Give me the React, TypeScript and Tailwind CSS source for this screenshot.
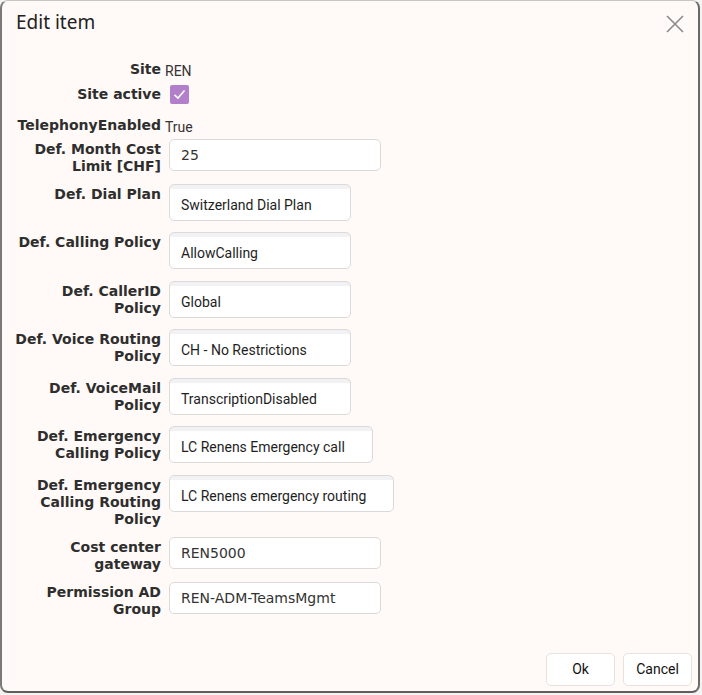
import React from "react";

const labelCls =
  "w-[146px] ml-[15px] shrink-0 text-right font-['DejaVu_Sans',sans-serif] font-bold text-[14px] leading-[17px] text-[#2e2e2e]";

function Label({ children }: { children: React.ReactNode }) {
  return <div className={labelCls + " pt-[2px]"}>{children}</div>;
}

function SelectBox({ value, w }: { value: string; w: string }) {
  return (
    <div
      className={
        "ml-[8px] h-[37px] flex items-center pl-[11px] pt-[5px] rounded-[5px] border border-[#dcdad8] bg-[linear-gradient(to_bottom,#f2f2f5_0px,#f2f2f5_4px,#ffffff_4px)] font-['Roboto',sans-serif] text-[14px] text-[#1e1e1e] " +
        w
      }
    >
      {value}
    </div>
  );
}

function TextInput({ value }: { value: string }) {
  return (
    <div className="ml-[8px] w-[212px] h-[32px] flex items-center pl-[11px] pt-[1px] rounded-[5px] border border-[#dcdad8] bg-white font-['DejaVu_Sans',sans-serif] text-[14px] text-[#333]">
      {value}
    </div>
  );
}

export default function App() {
  return (
    <div className="w-[702px] h-[695px] bg-[#f3f3f3]">
      <div className="relative w-[700px] h-[693px] rounded-[8px] bg-[#fffaf7] border-t border-t-[#c9c6c4] border-l-2 border-l-[#7a7a7a] border-r-2 border-r-[#6a6a6a] border-b-2 border-b-[#5e5e5e] flex flex-col">
        <div className="flex items-center justify-between h-[44px] pl-[14px] pr-[14px]">
          <div className="font-['Noto_Sans',sans-serif] text-[19px] text-[#222] leading-none pb-[1px]">
            Edit item
          </div>
          <svg width="18" height="18" viewBox="0 0 18 18" className="mt-[1px]">
            <path d="M1 1 L17 17 M17 1 L1 17" stroke="#8a8a8a" strokeWidth="1.6" fill="none" />
          </svg>
        </div>

        <div className="flex flex-col mt-[14px] ml-[-2px]">
          <div className="flex items-start h-[26px]">
            <Label>Site</Label>
            <div className="ml-[4px] pt-[2px] font-['Roboto',sans-serif] text-[14px] text-[#333]">REN</div>
          </div>
          <div className="flex items-start h-[30px]">
            <div className={labelCls + " pt-[1px]"}>Site active</div>
            <div className="ml-[9px] w-[19px] h-[19px] rounded-[2px] bg-[#b27fca] flex items-center justify-center">
              <svg width="13" height="13" viewBox="0 0 13 13">
                <path d="M1.5 6.8 L5 10 L11.5 2.5" stroke="#ffffff" strokeWidth="1.6" fill="none" />
              </svg>
            </div>
          </div>
          <div className="flex items-start h-[24px]">
            <Label>TelephonyEnabled</Label>
            <div className="ml-[4px] pt-[2px] font-['Roboto',sans-serif] text-[14px] text-[#333]">True</div>
          </div>
          <div className="flex items-start h-[45px]">
            <Label>
              Def. Month Cost
              <br />
              Limit [CHF]
            </Label>
            <TextInput value="25" />
          </div>
          <div className="flex items-start h-[48px]">
            <Label>Def. Dial Plan</Label>
            <SelectBox value="Switzerland Dial Plan" w="w-[182px]" />
          </div>
          <div className="flex items-start h-[49px]">
            <Label>Def. Calling Policy</Label>
            <SelectBox value="AllowCalling" w="w-[182px]" />
          </div>
          <div className="flex items-start h-[48px]">
            <Label>
              Def. CallerID
              <br />
              Policy
            </Label>
            <SelectBox value="Global" w="w-[182px]" />
          </div>
          <div className="flex items-start h-[49px]">
            <Label>
              Def. Voice Routing
              <br />
              Policy
            </Label>
            <SelectBox value="CH - No Restrictions" w="w-[182px]" />
          </div>
          <div className="flex items-start h-[48px]">
            <Label>
              Def. VoiceMail
              <br />
              Policy
            </Label>
            <SelectBox value="TranscriptionDisabled" w="w-[182px]" />
          </div>
          <div className="flex items-start h-[49px]">
            <Label>
              Def. Emergency
              <br />
              Calling Policy
            </Label>
            <SelectBox value="LC Renens Emergency call" w="w-[204px]" />
          </div>
          <div className="flex items-start h-[62px]">
            <Label>
              Def. Emergency
              <br />
              Calling Routing
              <br />
              Policy
            </Label>
            <SelectBox value="LC Renens emergency routing" w="w-[225px]" />
          </div>
          <div className="flex items-start h-[45px]">
            <Label>
              Cost center
              <br />
              gateway
            </Label>
            <TextInput value="REN5000" />
          </div>
          <div className="flex items-start h-[32px]">
            <Label>
              Permission AD
              <br />
              Group
            </Label>
            <TextInput value="REN-ADM-TeamsMgmt" />
          </div>
        </div>

        <div className="mt-auto mb-[5px] flex justify-end gap-[8px] pr-[6px]">
          <button className="w-[69px] h-[33px] rounded-[5px] border border-[#e8e2de] bg-white font-['Roboto',sans-serif] text-[14px] text-[#111]">
            Ok
          </button>
          <button className="w-[69px] h-[33px] rounded-[5px] border border-[#e8e2de] bg-white font-['Roboto',sans-serif] text-[14px] text-[#111]">
            Cancel
          </button>
        </div>
      </div>
    </div>
  );
}
